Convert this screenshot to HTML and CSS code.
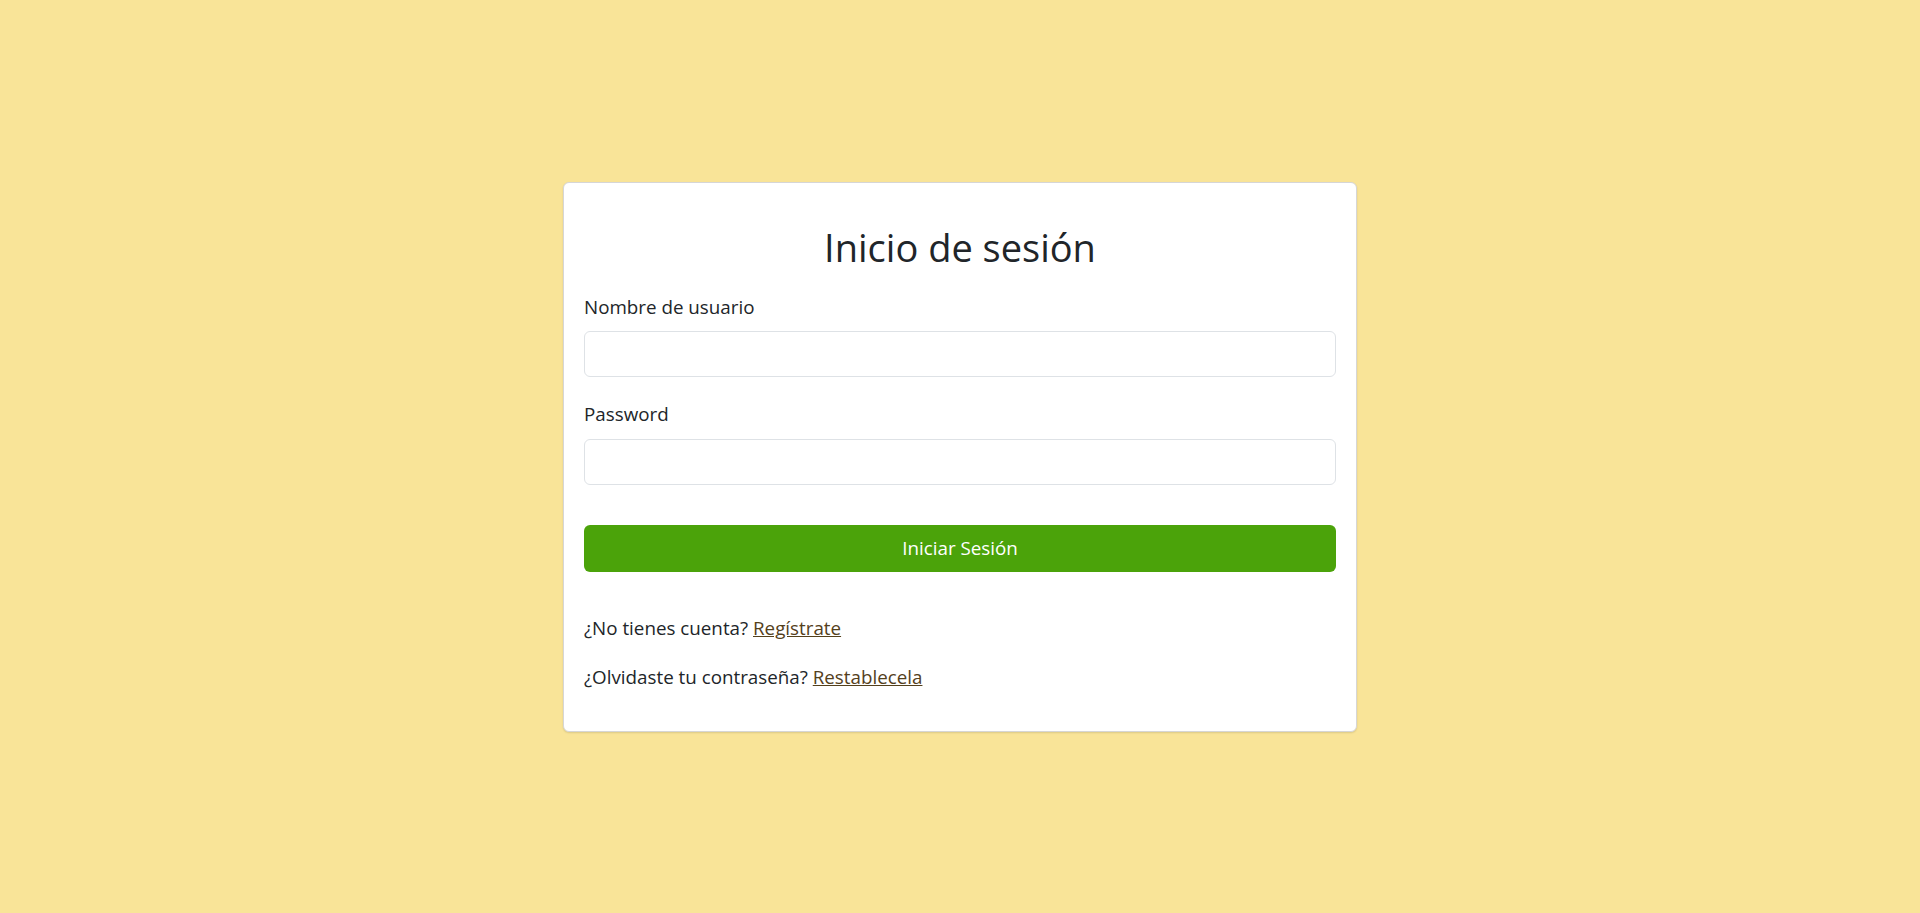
FILE: index.html
```html
<!DOCTYPE html>
<html lang="es">
<head>
<meta charset="utf-8">
<title>Inicio de sesión</title>
<link rel="stylesheet" href="styles.css">
</head>
<body>
<main class="page">
  <form class="card">
    <h1 class="title">Inicio de sesión</h1>
    <label class="label" for="user">Nombre de usuario</label>
    <input class="input" id="user" type="text">
    <label class="label label-second" for="pass">Password</label>
    <input class="input" id="pass" type="password">
    <button class="btn" type="button">Iniciar Sesión</button>
    <p class="note note-first">¿No tienes cuenta? <a href="#" class="link">Regístrate</a></p>
    <p class="note note-second">¿Olvidaste tu contraseña? <a href="#" class="link">Restablecela</a></p>
  </form>
</main>
</body>
</html>
```
FILE: styles.css
```css
* { box-sizing: border-box; }
html, body { margin: 0; height: 100%; }
body {
  background: #f9e498;
  font-family: "Open Sans", "Noto Sans", sans-serif;
  color: #212529;
}
.page {
  height: 100%;
  display: flex;
  align-items: center;
  justify-content: center;
}
.card {
  width: 794px;
  background: #fff;
  border: 1px solid #d6d6d6;
  border-radius: 6px;
  box-shadow: 0 1px 2px rgba(0,0,0,0.12);
  padding: 20px;
  display: flex;
  flex-direction: column;
}
.title {
  font-size: 38px;
  font-weight: 400;
  line-height: 46px;
  text-align: center;
  margin: 21px 0 23px;
  color: #212529;
}
.label {
  font-size: 18.8px;
  line-height: 28px;
  margin-bottom: 10px;
}
.label-second { margin-top: 23px; margin-bottom: 11px; }
.input {
  height: 46px;
  border: 1px solid #dee2e6;
  border-radius: 6px;
  font: inherit;
  padding: 6px 12px;
  background: #fff;
}
.btn {
  margin-top: 40px;
  height: 47px;
  border: 0;
  border-radius: 6px;
  background: #4ba30a;
  color: #fff;
  font-family: inherit;
  font-size: 18.8px;
}
.note {
  font-size: 18.8px;
  line-height: 28px;
  margin: 0;
}
.note-first { margin-top: 42px; }
.note-second { margin-top: 21px; margin-bottom: 20px; }
.link { color: #54401b; }
```
